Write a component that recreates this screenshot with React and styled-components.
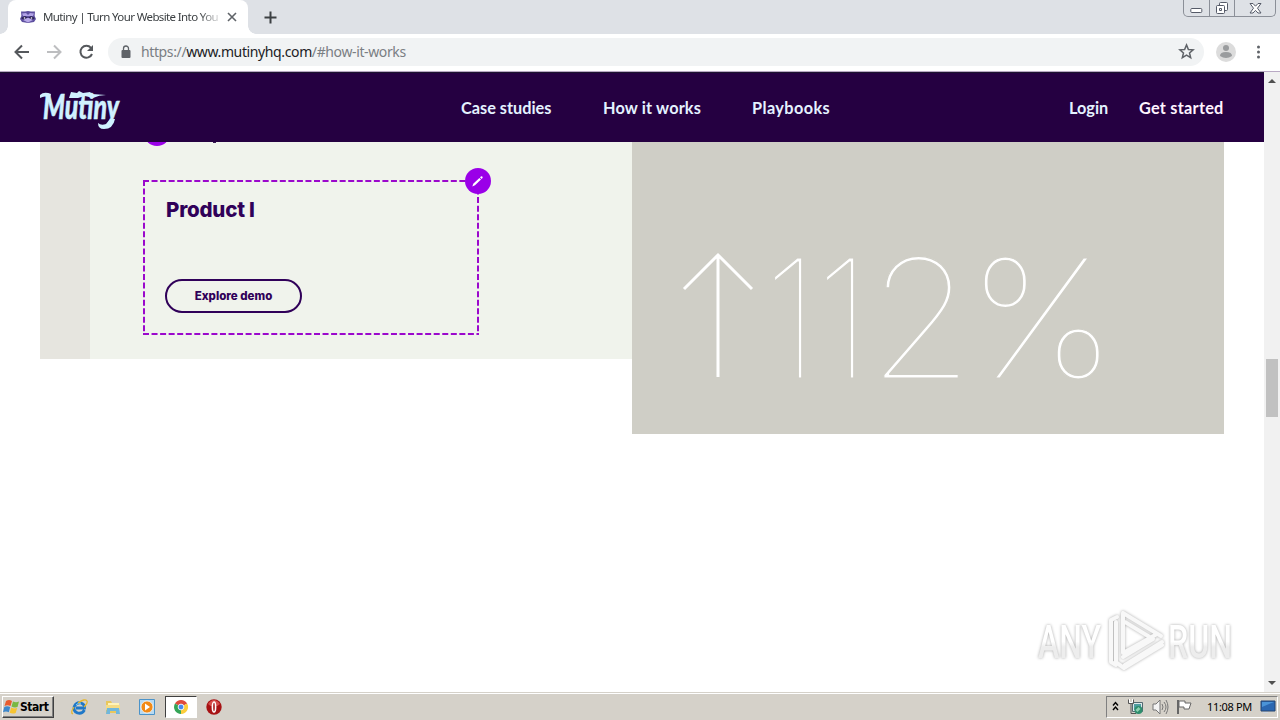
import React from 'react';
import styled, { createGlobalStyle, css } from 'styled-components';

const GlobalStyle = createGlobalStyle`
    * {
        box-sizing: border-box;
    }

    body {
        margin: 0;
        overflow: hidden;
        background: #fff;
        font-family: Roboto, 'Open Sans', sans-serif;
    }

    svg {
        display: block;
        flex: none;
        overflow: visible;
    }
`;

const Screen = styled.div`
    position: relative;
    width: 1280px;
    height: 720px;
    display: flex;
    flex-direction: column;
    overflow: hidden;
`;

/* Browser chrome */
const TabStrip = styled.div`
    height: 34px;
    flex: none;
    display: flex;
    justify-content: space-between;
    background: #dee1e6;
`;

const TabGroup = styled.div`
    display: flex;
    align-items: center;
`;

const Tab = styled.div`
    position: relative;
    width: 240px;
    height: 34px;
    margin-left: 8px;
    padding: 0 11px 0 12px;
    display: flex;
    align-items: center;
    background: #fff;
    border-radius: 8px 8px 0 0;

    &::before,
    &::after {
        content: '';
        position: absolute;
        bottom: 0;
        width: 8px;
        height: 8px;
    }

    &::before {
        left: -8px;
        background: radial-gradient(circle at 0 0, #dee1e6 7.5px, #fff 8px);
    }

    &::after {
        right: -8px;
        background: radial-gradient(circle at 100% 0, #dee1e6 7.5px, #fff 8px);
    }
`;

const TabTitle = styled.span`
    width: 176px;
    margin: 0 8px 0 7px;
    overflow: hidden;
    white-space: nowrap;
    font: 11.5px/16px 'Noto Sans', sans-serif;
    letter-spacing: -0.62px;
    color: #3c4043;
    mask-image: linear-gradient(90deg, #000 156px, transparent 180px);
`;

const NewTab = styled.div`
    margin-left: 16px;
`;

const WindowControls = styled.div`
    width: 93px;
    height: 17px;
    margin-right: 4px;
    display: flex;
    border: 1px solid #8b8f98;
    border-top: 0;
    border-radius: 0 0 5px 5px;
`;

const WindowButton = styled.div`
    width: ${(p) => p.$width}px;
    display: flex;
    justify-content: center;
    align-items: center;

    & + & {
        border-left: 1px solid #8b8f98;
    }
`;

const Toolbar = styled.div`
    height: 38px;
    flex: none;
    display: flex;
    align-items: center;
    padding: 0 12px 2px 14px;
    background: #fff;
    border-bottom: 1px solid #b9a9c4;
`;

const NavButtons = styled.div`
    display: flex;
    gap: 14px;
    margin-right: 12px;
`;

const AddressBar = styled.div`
    width: 1096px;
    height: 28px;
    padding: 0 9px 0 10px;
    display: flex;
    align-items: center;
    border-radius: 14px;
    background: #f1f3f4;
`;

const Url = styled.span`
    flex: 1;
    margin-left: 7px;
    font: 14px/20px 'Noto Sans', sans-serif;
    letter-spacing: -0.38px;
    color: #7a7e83;

    b {
        font-weight: 400;
        color: #202124;
    }
`;

const ToolbarEnd = styled.div`
    display: flex;
    align-items: center;
    gap: 12px;
    margin-left: 12px;
`;

/* Page */
const Viewport = styled.div`
    height: 620px;
    flex: none;
    display: flex;
`;

const Page = styled.main`
    width: 1264px;
    overflow: hidden;
    background: #fff;
`;

const Header = styled.header`
    height: 70px;
    padding: 2px 40px 0;
    display: grid;
    grid-template-columns: 421px 1fr auto;
    align-items: center;
    background: #250041;
    border-top: 1px solid #1d1430;
`;

const Nav = styled.nav`
    display: flex;
    gap: ${(p) => p.$gap}px;
    padding-bottom: 2px;
`;

const NavLink = styled.span`
    width: ${(p) => p.$width}px;
    white-space: nowrap;
    font: 700 16.3px/22px Lato, sans-serif;
    letter-spacing: ${(p) => p.$spacing || 0}px;
    color: ${(p) => (p.$bright ? '#fff4ff' : '#e4f2ff')};
`;

const Feature = styled.section`
    display: flex;
    align-items: flex-start;
    margin: 0 40px;
`;

const Demo = styled.div`
    width: 592px;
    height: 217px;
    border-left: 50px solid #e6e5df;
    background: #f0f3ec;
    padding-left: 53px;
`;

const ScrolledRow = styled.div`
    height: 38px;
    padding-left: 1px;
    display: flex;
    align-items: flex-start;
    overflow: hidden;
`;

const Badge = styled.div`
    width: 26px;
    height: 26px;
    display: flex;
    align-items: center;
    justify-content: center;
    border-radius: 50%;
    background: #9a00e8;
`;

const ScrolledBadge = styled(Badge)`
    margin-top: -22px;
`;

const Descender = styled.i`
    width: 3px;
    height: 1px;
    margin-left: 43px;
    background: #3a1a55;
`;

const EditBox = styled.div`
    position: relative;
    width: 336px;
    height: 155px;
    padding: 16px 23px;
`;

const EditOutline = styled.svg`
    position: absolute;
    inset: 0;
`;

const EditBadge = styled(Badge)`
    position: absolute;
    top: -12px;
    right: -12px;
`;

const ProductTitle = styled.h2`
    margin: 0;
    font: 800 20.5px/28px Inter, sans-serif;
    letter-spacing: -0.2px;
    color: #300059;
`;

const DemoButton = styled.button`
    display: block;
    width: 137px;
    height: 34px;
    margin: 55px 0 0 -1px;
    padding: 0;
    border: 2px solid #300059;
    border-radius: 17px;
    background: transparent;
    font: 800 11.5px/30px Inter, sans-serif;
    color: #300059;
`;

const Stat = styled.div`
    width: 592px;
    height: 292px;
    padding: 111px 0 0 50px;
    display: flex;
    align-items: flex-start;
    background: #cfcec6;
`;

const Digits = styled.div`
    display: flex;
    margin: 5px 0 0 14px;
    font: 100 165px/120px Inter, sans-serif;
    color: #fff;
`;

/* the stroke in the panel colour trims the strokes to a hairline */
const Digit = styled.span`
    width: ${(p) => p.$width}px;
    transform: translateX(${(p) => p.$shift || 0}px) scaleX(${(p) => p.$stretch || 1});
    transform-origin: 0 0;
    -webkit-text-stroke: 1.2px #cfcec6;
`;

const Scrollbar = styled.div`
    width: 16px;
    padding: 7px 0 7px;
    display: flex;
    flex-direction: column;
    align-items: center;
    background: #f1f1f1;
`;

const Thumb = styled.div`
    width: 12px;
    height: 58px;
    margin: 276px 0 auto;
    background: #c1c1c1;
`;

const Watermark = styled.div`
    position: absolute;
    left: 1037px;
    top: 608px;
    width: 198px;
    height: 66px;
`;

/* Taskbar */
const Taskbar = styled.div`
    height: 28px;
    flex: none;
    display: flex;
    align-items: center;
    padding: 2px 0 0 2px;
    background: #d5d1c9;
    box-shadow: inset 0 1px #d5d1c9, inset 0 2px #fff;
`;

const raised = css`
    border: 1px solid;
    border-color: #fff #404040 #404040 #fff;
    box-shadow: inset -1px -1px #808080;
`;

const StartButton = styled.div`
    ${raised}
    width: 52px;
    height: 22px;
    padding-left: 0;
    display: flex;
    align-items: center;
    font: 700 12px/18px 'DejaVu Sans Condensed', 'DejaVu Sans', sans-serif;
    letter-spacing: -0.45px;
    color: #000;
`;

const QuickLaunch = styled.div`
    flex: 1;
    margin-left: 9px;
    display: flex;
    align-items: center;
`;

const LaunchItem = styled.div`
    width: ${(p) => (p.$active ? 32 : 33.5)}px;
    height: 22px;
    display: flex;
    justify-content: center;
    align-items: center;
    ${(p) =>
        p.$active &&
        css`
            margin: 0 1px;
            background: #fff;
            border: 1px solid;
            border-color: #404040 #fff #fff #404040;
        `}
`;

const Tray = styled.div`
    width: 172px;
    height: 22px;
    margin-right: 2px;
    padding: 0 0 0 5px;
    display: flex;
    align-items: center;
    border: 1px solid;
    border-color: #808080 #fff #fff #808080;
`;

const TrayIcons = styled.div`
    display: flex;
    align-items: center;
    gap: 8px;
`;

const Clock = styled.span`
    width: 46px;
    margin: 0 7px 0 15px;
    white-space: nowrap;
    font: 11px/18px 'Noto Sans', sans-serif;
    letter-spacing: -0.35px;
    color: #000;
`;

const RaccoonIcon = () => (
    <svg width="16" height="16" viewBox="0 0 16 16">
        <path d="M1 2.5 5 2.5 8 2 11 2.5 15 2.5 14.6 7 16 10 14 13 8 14 2 13 0 10 1.4 7z" fill="#5d4f9f" />
        <path d="M2 4.5 6 4 8 6 10 4 14 4.5 13 7H3z" fill="#b1a2e6" />
        <path d="M1 9 5 7 8 9 11 7 15 9 12 11 8 12 4 11z" fill="#2b2154" />
        <path d="m3 11 4-2h2l4 2-5 2.5z" fill="#b8a9e9" />
        <circle cx="4.5" cy="9" r=".8" fill="#fff" />
        <circle cx="11.5" cy="9" r=".8" fill="#fff" />
    </svg>
);

const MutinyLogo = () => (
    <svg width="82" height="44" viewBox="0 0 82 44" fill="#d0f1ff">
        <text
            x="3"
            y="32"
            textLength="76"
            lengthAdjust="spacingAndGlyphs"
            fontFamily="Lato, sans-serif"
            fontWeight="900"
            fontStyle="italic"
            fontSize="34"
            stroke="#d0f1ff"
            strokeWidth=".5"
        >
            Mutiny
        </text>
        <path d="M0 8Q4 4 11 7L10 11Q5 8 0 11z" />
        <path d="M29 11 31 5 37 6 39 4 43 6 50 5 52 7 66 8Q59 8 53 11L45 9 38 11z" />
        <path d="M58 36Q61 39 66 37L70 32 75 32Q73 42 64 42 58 42 58 36z" />
    </svg>
);

const EditIcon = () => (
    <svg width="12" height="12" viewBox="0 0 12 12" fill="#fff">
        <path d="M.3 11.4 1.3 8.7 7.4 2.9 9 4.5 3 10.3z" />
        <path d="M8 2.3 8.9 1.4Q9.7.9 10.3 1.5 11 2.1 10.5 3L9.6 3.9z" />
    </svg>
);

const ArrowUp = () => (
    <svg width="72" height="126" viewBox="0 0 72 126" fill="none" stroke="#fff" strokeWidth="3">
        <path d="M36 124V3M2 36 36 2 70 36" />
    </svg>
);

const AnyRunMark = () => (
    <svg
        width="198"
        height="66"
        viewBox="0 0 198 66"
        style={{ filter: 'drop-shadow(0 0 1.5px #aaa)' }}
    >
        <defs>
            <linearGradient id="mark" x1="0" y1="0" x2="0" y2="1">
                <stop offset=".5" stopColor="#fff" />
                <stop offset=".6" stopColor="#ededed" />
            </linearGradient>
        </defs>
        <g fill="url(#mark)" fontFamily="Roboto, sans-serif" fontWeight="500" fontSize="47">
            <text x="1" y="50" textLength="63" lengthAdjust="spacingAndGlyphs">ANY</text>
            <text x="131" y="50" textLength="64" lengthAdjust="spacingAndGlyphs">RUN</text>
        </g>
        <g fill="none" stroke="#f8f8f8" strokeWidth="4" strokeLinejoin="round" strokeLinecap="round">
            <path d="M80 9 74 12V54L79 57V14" />
            <path d="M124 28 86 5V45L120 26M88 14 116 31 86 49" />
            <path d="M125 34 88 57M80 55 87 60 125 37" />
        </g>
    </svg>
);

const WindowsFlag = () => (
    <svg width="17" height="16" viewBox="0 0 17 16">
        <path d="M3 2Q6 0 9 2L7.5 7Q4.5 5.5 1.5 7z" fill="#e85b2e" />
        <path d="M10 2.5Q13 4 16 2.5L14.5 8Q11.5 9 8.5 7.5z" fill="#79b843" />
        <path d="M1.3 8Q4 6.5 7.2 8L5.8 13.3Q3 11.8 0 13.3z" fill="#3d87cb" />
        <path d="M8.2 8.5Q11 10 14.2 9L12.7 14Q9.5 15.2 6.7 13.8z" fill="#f7c431" />
    </svg>
);

const ExplorerIcon = () => (
    <svg width="17" height="17" viewBox="0 0 17 17" fill="none">
        <path d="M13.5 11Q11 15.2 6.5 14 2 12 3.2 7.5 5.5 2.8 10 4 14 5.5 13.5 9H5" stroke="#1f78c8" strokeWidth="2.8" />
        <path d="M5 6Q7 3.5 10 4.2" stroke="#7ed0f7" />
        <path d="M2 15Q-1 14 3 8M7 4Q14-1 16 2 17 4 13 8" stroke="#e7b72d" strokeWidth="1.3" />
    </svg>
);

const FolderIcon = () => (
    <svg width="16" height="16" viewBox="0 0 16 16">
        <path d="M1 2h5l1 2h7v10H1z" fill="#e9c75c" />
        <path d="M3 4h11v8H3z" fill="#fff3b9" />
        <path d="M1 6h14v5H1z" fill="#f5dc85" />
        <path d="M2 9h12l1 6h-4v-3H5v3H1z" fill="#70b7dc" />
    </svg>
);

const MediaIcon = () => (
    <svg width="16" height="16" viewBox="0 0 16 16">
        <path d="M.5.5h15v15H.5z" fill="#b7daf2" stroke="#4b93c9" />
        <circle cx="8" cy="8" r="6" fill="#f28a16" stroke="#fff" strokeWidth=".7" />
        <path d="m6 4.5 5 3.5-5 3.5z" fill="#fff" />
    </svg>
);

const ChromeIcon = () => (
    <svg width="14" height="14" viewBox="0 0 16 16">
        <path d="M8 8 1.1 4A8 8 0 0 1 15 4z" fill="#df4a3c" />
        <path d="M8 8 15 4A8 8 0 0 1 8 16z" fill="#fccd3b" />
        <path d="M8 8V16A8 8 0 0 1 1.1 4z" fill="#35a557" />
        <circle cx="8" cy="8" r="3.3" fill="#4688ef" stroke="#fff" />
    </svg>
);

const OperaIcon = () => (
    <svg width="16" height="16" viewBox="0 0 16 16">
        <circle cx="8" cy="8" r="7.7" fill="#a71214" />
        <path d="M2 5Q8-3 14 5 11 8 8 7 5 8 2 5" fill="#d74e4c" />
        <ellipse cx="8" cy="8" rx="1.6" ry="5" fill="#a71214" stroke="#fff" strokeWidth="1.6" />
    </svg>
);

const TrayStatus = () => (
    <TrayIcons>
        <svg width="7" height="12" viewBox="0 0 7 12" fill="none" stroke="#000" strokeWidth="1.4">
            <path d="m1 4.5 2.5-3 2.5 3M1 9l2.5-3L6 9" />
        </svg>
        <svg width="17" height="16" viewBox="0 0 17 16" fill="none">
            <path d="M5.5 3.5h10v9h-10z" fill="#dce8ea" stroke="#536970" />
            <path d="M7 5h7v6H7z" fill="#4f9da0" />
            <path d="M1.5.5v4h5v-4M4 4.5v10h5" stroke="#555" />
            <path d="M2.5 0v3.5h3V0" stroke="#fff" />
            <circle cx="11.5" cy="11" r="4" fill="#2e8d6d" />
            <path d="m8.5 11 3-3 2 2-3 3z" fill="#8ed1b1" />
        </svg>
        <svg width="16" height="16" viewBox="0 0 16 16" fill="none" stroke="#777">
            <path d="M1 5h3l4-4v14l-4-4H1z" fill="#f3f3f3" />
            <path d="M10 5q2 3 0 6M12 3q4 5 0 10M14 1q4 7 0 14" />
        </svg>
        <svg width="16" height="16" viewBox="0 0 16 16">
            <path d="M2 1v14" stroke="#666" strokeWidth="2" />
            <path d="M3 2h6v2h6l-2 6H8V8H3z" fill="#fff" stroke="#666" />
        </svg>
    </TrayIcons>
);

const Browser = () => (
    <>
        <TabStrip>
            <TabGroup>
                <Tab>
                    <RaccoonIcon />
                    <TabTitle>Mutiny | Turn Your Website Into You</TabTitle>
                    <svg width="10" height="10" viewBox="0 0 10 10" stroke="#5f6368" strokeWidth="1.6">
                        <path d="m1 1 8 8M9 1 1 9" />
                    </svg>
                </Tab>
                <NewTab>
                    <svg width="13" height="13" viewBox="0 0 13 13" stroke="#3c4043" strokeWidth="2">
                        <path d="M6.5.5v12M.5 6.5h12" />
                    </svg>
                </NewTab>
            </TabGroup>
            <WindowControls>
                <WindowButton $width={25}>
                    <svg width="13" height="13" viewBox="0 0 13 13">
                        <rect x=".8" y="6.5" width="11" height="4" rx="1" fill="#fff" stroke="#555a68" />
                    </svg>
                </WindowButton>
                <WindowButton $width={25}>
                    <svg width="13" height="13" viewBox="0 0 13 13" fill="#fff" stroke="#555a68">
                        <rect x="3.5" y=".5" width="8" height="8" rx="1" />
                        <rect x=".5" y="3.5" width="8" height="8" rx="1" />
                        <path d="M3.5 6.5h2v2h-2z" />
                    </svg>
                </WindowButton>
                <WindowButton $width={41}>
                    <svg width="13" height="11" viewBox="0 0 13 11">
                        <path d="M1 .5h3l2.5 2.7L9 .5h3L8.5 5.2 12 10H9L6.5 7.4 4 10H1l3.5-4.8z" fill="#fff" stroke="#555a68" />
                    </svg>
                </WindowButton>
            </WindowControls>
        </TabStrip>
        <Toolbar>
            <NavButtons>
                <svg width="18" height="18" viewBox="0 0 18 18" fill="none" stroke="#55585c" strokeWidth="2">
                    <path d="M15 9H2M8 2.5 1.5 9 8 15.5" />
                </svg>
                <svg width="18" height="18" viewBox="0 0 18 18" fill="none" stroke="#bdbec0" strokeWidth="2">
                    <path d="M1 9h13M8 2.5 14.5 9 8 15.5" />
                </svg>
                <svg width="18" height="18" viewBox="0 0 18 18" fill="none" stroke="#55585c" strokeWidth="2">
                    <path d="M13 4.8A6 6 0 1 0 14 11" />
                    <path d="M15 2v6H9z" fill="#55585c" stroke="none" />
                </svg>
            </NavButtons>
            <AddressBar>
                <svg width="16" height="16" viewBox="0 0 16 16">
                    <rect x="3.5" y="6" width="9" height="8" rx="1" fill="#5f6368" />
                    <path d="M5.5 7V4.5a2.5 2.5 0 0 1 5 0V7" fill="none" stroke="#5f6368" strokeWidth="1.3" />
                </svg>
                <Url>
                    https://<b>www.mutinyhq.com</b>/#how-it-works
                </Url>
                <svg width="17" height="17" viewBox="0 0 18 18" fill="none" stroke="#5f6368" strokeWidth="1.6">
                    <path d="m9 2 2 4.8 5 .4-3.8 3.3 1.2 5L9 12.8l-4.4 2.7 1.2-5L2 7.2l5-.4z" />
                </svg>
            </AddressBar>
            <ToolbarEnd>
                <svg width="20" height="20" viewBox="0 0 20 20">
                    <circle cx="10" cy="10" r="10" fill="#dcdcdc" />
                    <circle cx="10" cy="6" r="3" fill="#9a9c9e" />
                    <path d="M4 14q0-4 6-4t6 4q-6 4-12 0" fill="#9a9c9e" />
                </svg>
                <svg width="20" height="16" viewBox="0 0 20 16" fill="#5f6368">
                    <circle cx="10.5" cy="3" r="1.5" />
                    <circle cx="10.5" cy="8" r="1.5" />
                    <circle cx="10.5" cy="13" r="1.5" />
                </svg>
            </ToolbarEnd>
        </Toolbar>
    </>
);

const Website = () => (
    <Page>
        <Header>
            <MutinyLogo />
            <Nav $gap={50}>
                <NavLink $width={92}>Case studies</NavLink>
                <NavLink $width={99} $spacing={0.15}>How it works</NavLink>
                <NavLink $width={79} $spacing={0.4}>Playbooks</NavLink>
            </Nav>
            <Nav $gap={30}>
                <NavLink $width={40}>Login</NavLink>
                <NavLink $width={85} $spacing={0.25} $bright>Get started</NavLink>
            </Nav>
        </Header>
        <Feature>
            <Demo>
                <ScrolledRow>
                    <ScrolledBadge />
                    <Descender />
                </ScrolledRow>
                <EditBox>
                    <EditOutline width="336" height="155" fill="none" stroke="#9b08cc" strokeWidth="2">
                        <path d="M0 1h336M1 0v155M335 0v155M0 154h336" strokeDasharray="6 2.55" />
                    </EditOutline>
                    <EditBadge>
                        <EditIcon />
                    </EditBadge>
                    <ProductTitle>Product I</ProductTitle>
                    <DemoButton>Explore demo</DemoButton>
                </EditBox>
            </Demo>
            <Stat>
                <ArrowUp />
                <Digits>
                    <Digit $width={52} $stretch={0.9} $shift={-4}>1</Digit>
                    <Digit $width={52} $stretch={0.9} $shift={-4}>1</Digit>
                    <Digit $width={92} $stretch={1.03} $shift={-4}>2</Digit>
                    <Digit $width={130} $stretch={1.07} $shift={3}>%</Digit>
                </Digits>
            </Stat>
        </Feature>
    </Page>
);

const App = () => (
    <Screen>
        <GlobalStyle />
        <Browser />
        <Viewport>
            <Website />
            <Scrollbar>
                <svg width="8" height="4" viewBox="0 0 8 4" fill="#505050">
                    <path d="M0 4 4 0l4 4z" />
                </svg>
                <Thumb />
                <svg width="8" height="4" viewBox="0 0 8 4" fill="#505050">
                    <path d="m0 0 4 4 4-4z" />
                </svg>
            </Scrollbar>
        </Viewport>
        <Taskbar>
            <StartButton>
                <WindowsFlag />
                Start
            </StartButton>
            <QuickLaunch>
                <LaunchItem><ExplorerIcon /></LaunchItem>
                <LaunchItem><FolderIcon /></LaunchItem>
                <LaunchItem><MediaIcon /></LaunchItem>
                <LaunchItem $active><ChromeIcon /></LaunchItem>
                <LaunchItem><OperaIcon /></LaunchItem>
            </QuickLaunch>
            <Tray>
                <TrayStatus />
                <Clock>11:08 PM</Clock>
                <svg width="16" height="14" viewBox="0 0 16 14">
                    <path d="M1 1h14v10H1z" fill="#2b67b1" stroke="#244570" />
                    <path d="M2 2h12L2 7z" fill="#4b94d8" />
                    <path d="M3 12h5v1H3z" fill="#cbd5e2" />
                </svg>
            </Tray>
        </Taskbar>
        <Watermark>
            <AnyRunMark />
        </Watermark>
    </Screen>
);

export default App;
